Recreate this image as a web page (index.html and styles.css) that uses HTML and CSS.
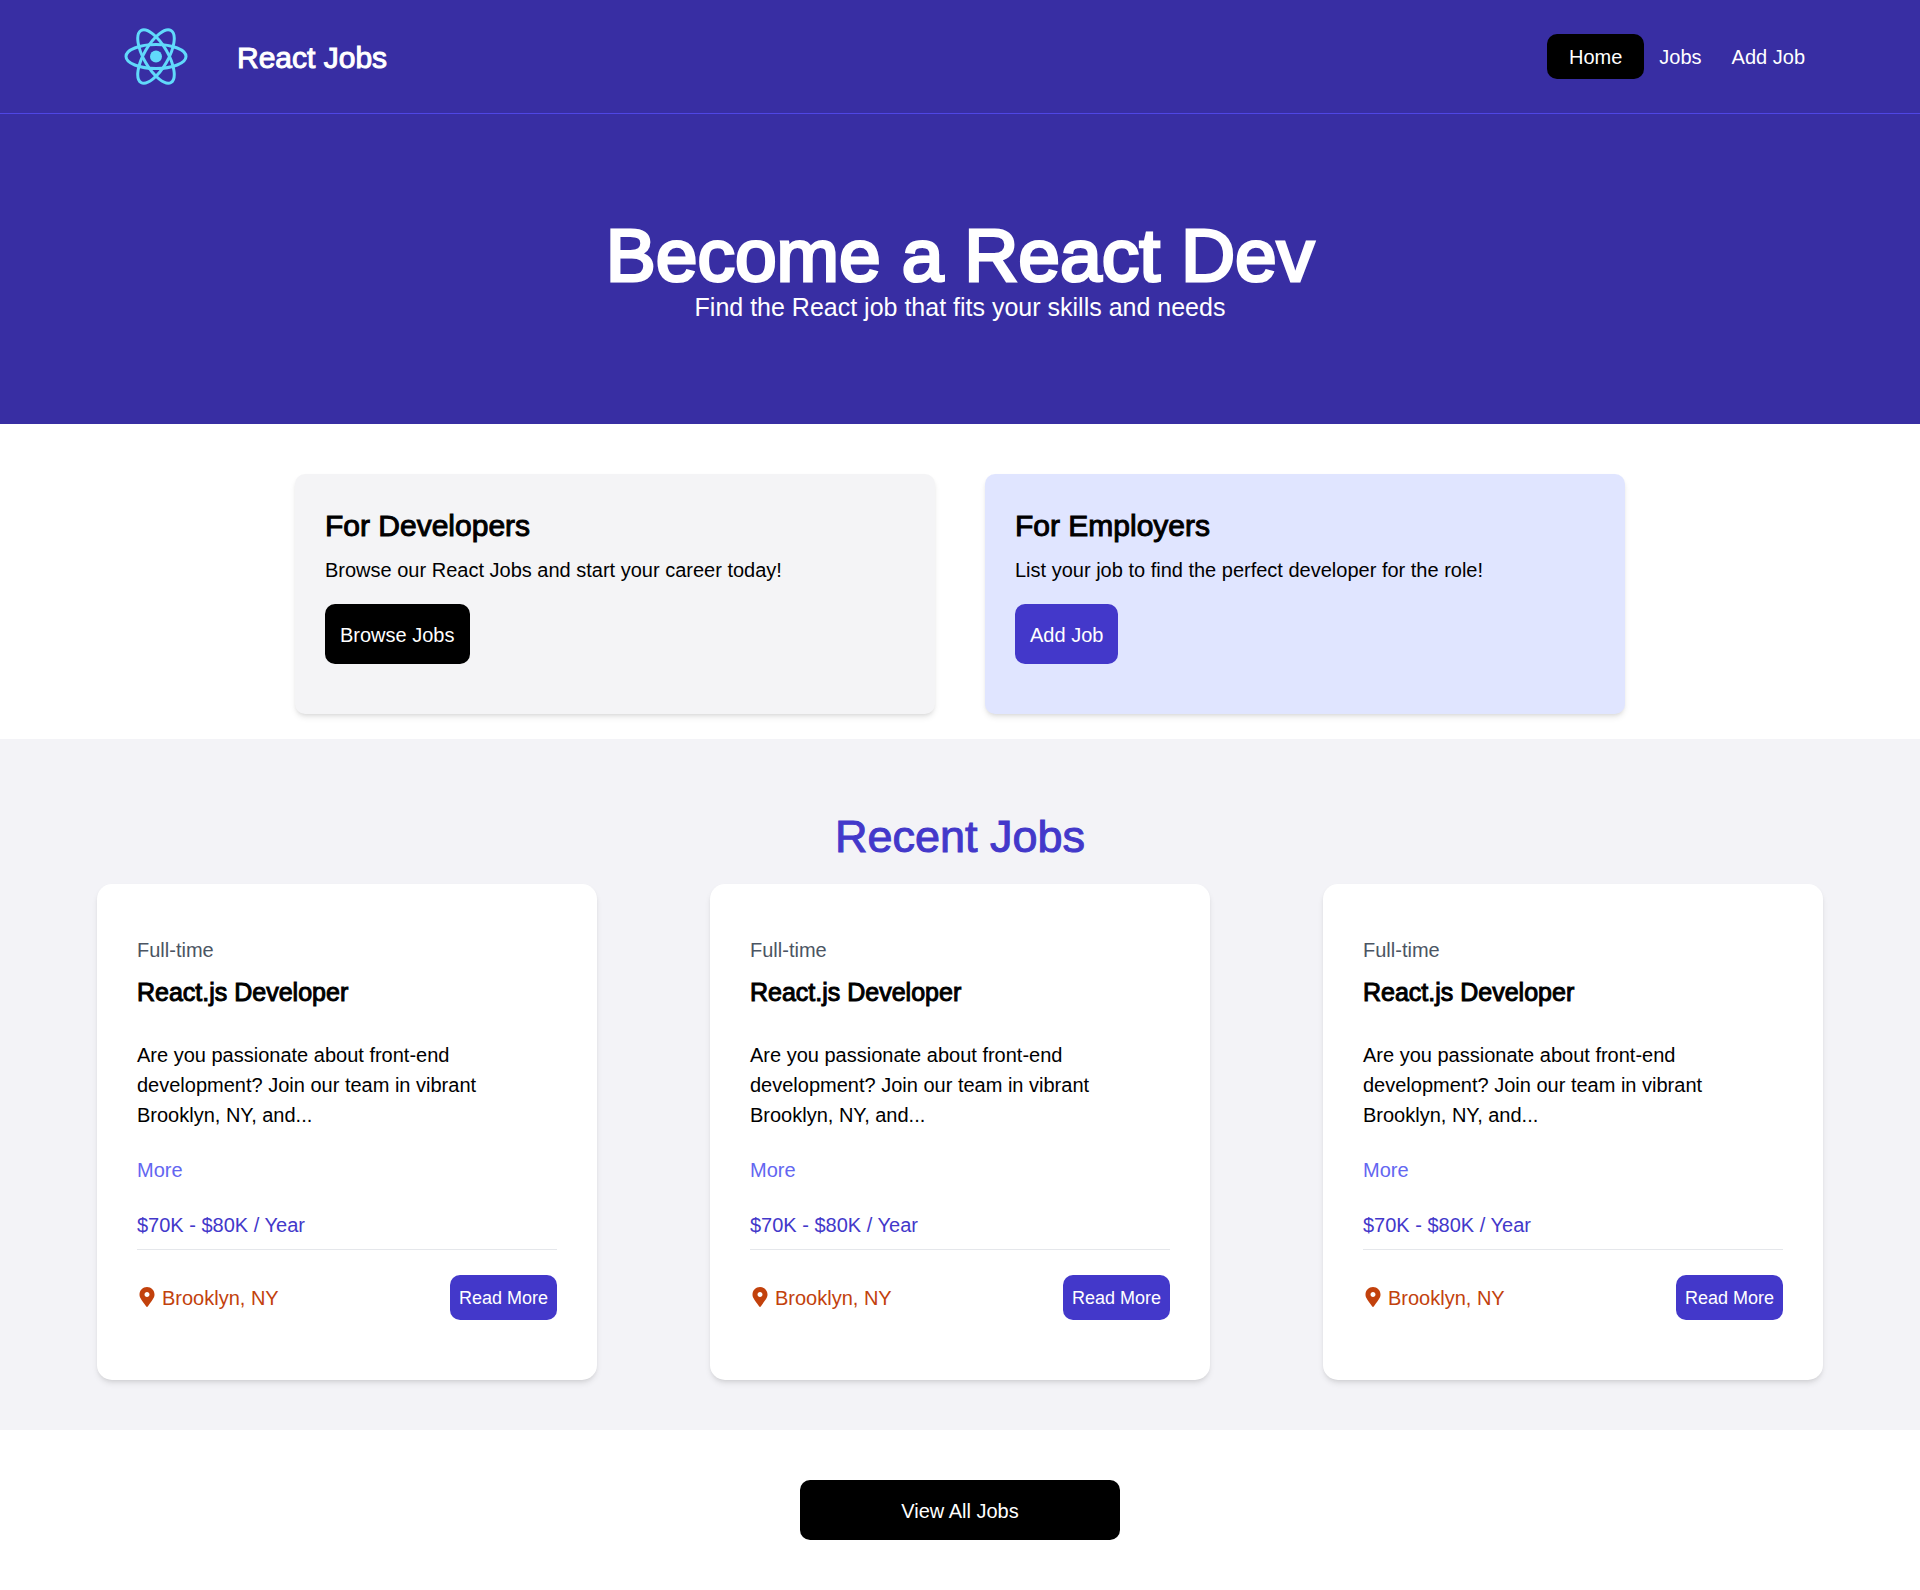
FILE: index.html
```html
<!DOCTYPE html>
<html lang="en">
<head>
  <meta charset="utf-8">
  <meta name="viewport" content="width=device-width, initial-scale=1">
  <title>React Jobs</title>
  <link rel="stylesheet" href="styles.css">
</head>
<body>
  <svg class="sprite" aria-hidden="true">
    <symbol id="pin" viewBox="0 0 384 512">
      <path d="M172.268 501.67C26.97 291.031 0 269.413 0 192 0 85.961 85.961 0 192 0s192 85.961 192 192c0 77.413-26.97 99.031-172.268 309.67-9.535 13.774-29.93 13.773-39.464 0zM192 256c35.346 0 64-28.654 64-64s-28.654-64-64-64-64 28.654-64 64 28.654 64 64 64z"/>
    </symbol>
  </svg>

  <header class="header">
    <a class="brand" href="#">
      <svg class="brand-logo" viewBox="-32 -28 64 56" aria-hidden="true">
        <circle r="6"/>
        <g class="orbits">
          <ellipse rx="30" ry="12"/>
          <ellipse rx="30" ry="12" transform="rotate(60)"/>
          <ellipse rx="30" ry="12" transform="rotate(120)"/>
        </g>
      </svg>
      <span class="brand-name faux-bold">React Jobs</span>
    </a>
    <nav class="nav">
      <a class="nav-link active" href="#">Home</a>
      <a class="nav-link" href="#">Jobs</a>
      <a class="nav-link" href="#">Add Job</a>
    </nav>
  </header>

  <main>
    <section class="hero">
      <h1 class="hero-title">Become a React Dev</h1>
      <p class="hero-text">Find the React job that fits your skills and needs</p>
    </section>

    <section class="audiences">
      <article class="audience">
        <h2 class="audience-title faux-bold">For Developers</h2>
        <p class="audience-text">Browse our React Jobs and start your career today!</p>
        <a class="button dark" href="#">Browse Jobs</a>
      </article>
      <article class="audience employers">
        <h2 class="audience-title faux-bold">For Employers</h2>
        <p class="audience-text">List your job to find the perfect developer for the role!</p>
        <a class="button" href="#">Add Job</a>
      </article>
    </section>

    <section class="recent">
      <h2 class="recent-title faux-bold">Recent Jobs</h2>
      <div class="jobs">
        <article class="job">
          <p class="job-type">Full-time</p>
          <h3 class="job-title faux-bold">React.js Developer</h3>
          <p class="job-text">Are you passionate about front-end development? Join our team in vibrant Brooklyn, NY, and...</p>
          <button class="job-more" type="button">More</button>
          <p class="job-salary">$70K - $80K / Year</p>
          <div class="job-footer">
            <span class="job-place"><svg class="pin" aria-hidden="true"><use href="#pin"/></svg>Brooklyn, NY</span>
            <a class="read-more" href="#">Read More</a>
          </div>
        </article>
        <article class="job">
          <p class="job-type">Full-time</p>
          <h3 class="job-title faux-bold">React.js Developer</h3>
          <p class="job-text">Are you passionate about front-end development? Join our team in vibrant Brooklyn, NY, and...</p>
          <button class="job-more" type="button">More</button>
          <p class="job-salary">$70K - $80K / Year</p>
          <div class="job-footer">
            <span class="job-place"><svg class="pin" aria-hidden="true"><use href="#pin"/></svg>Brooklyn, NY</span>
            <a class="read-more" href="#">Read More</a>
          </div>
        </article>
        <article class="job">
          <p class="job-type">Full-time</p>
          <h3 class="job-title faux-bold">React.js Developer</h3>
          <p class="job-text">Are you passionate about front-end development? Join our team in vibrant Brooklyn, NY, and...</p>
          <button class="job-more" type="button">More</button>
          <p class="job-salary">$70K - $80K / Year</p>
          <div class="job-footer">
            <span class="job-place"><svg class="pin" aria-hidden="true"><use href="#pin"/></svg>Brooklyn, NY</span>
            <a class="read-more" href="#">Read More</a>
          </div>
        </article>
      </div>
    </section>

    <section class="all-jobs">
      <a class="button dark wide" href="#">View All Jobs</a>
    </section>
  </main>
</body>
</html>
```
FILE: styles.css
```css
* {
  box-sizing: border-box;
  margin: 0;
}

body {
  background: #fff;
  color: #000;
  font: 20px/30px "Liberation Sans", Arial, sans-serif;
}

a {
  color: inherit;
  text-decoration: none;
}

h1, h2, h3 {
  font-weight: 400;
}

/* Thickens the regular cut while keeping its letter widths */
.faux-bold {
  -webkit-text-stroke: 1px currentColor;
}

.sprite {
  display: none;
}

.header {
  display: flex;
  align-items: center;
  justify-content: space-between;
  padding: 28px 100px;
  background: #382ea3;
  border-bottom: 1px solid #4f46e5;
  color: #fff;
}

.brand {
  display: flex;
  align-items: center;
  gap: 49px;
  padding-left: 24px;
}

.brand-logo {
  width: 64px;
  height: 57px;
  fill: #61dafb;
}

.orbits {
  fill: none;
  stroke: #61dafb;
  stroke-width: 3;
}

.brand-name {
  padding-top: 2px;
  font-size: 30px;
  line-height: 45px;
}

.nav {
  display: flex;
}

.nav-link {
  padding: 8px 15px 7px;
}

.nav-link.active {
  padding-inline: 22px;
  border-radius: 10px;
  background: #000;
}

.hero {
  padding: 104px 20px 103px;
  background: #382ea3;
  color: #fff;
  text-align: center;
}

.hero-title {
  font-size: 75px;
  line-height: 75px;
  -webkit-text-stroke: 3px currentColor;
}

.hero-text {
  font-size: 25px;
  line-height: 28px;
}

.audiences {
  display: grid;
  grid-template-columns: repeat(auto-fit, minmax(min(100%, 480px), 1fr));
  gap: 50px;
  max-width: 1370px;
  margin: 0 auto;
  padding: 50px 20px 25px;
}

.audience {
  padding: 30px 30px 50px;
  border-radius: 10px;
  background: #f4f4f6;
  box-shadow: 0 4px 6px -1px rgba(0, 0, 0, 0.1), 0 2px 4px -2px rgba(0, 0, 0, 0.1);
}

.audience.employers {
  background: #e0e5ff;
}

.audience-title {
  margin-bottom: 8px;
  font-size: 30px;
  line-height: 43px;
}

.audience-text {
  margin-bottom: 19px;
}

.button {
  display: inline-block;
  padding: 16px 15px 14px;
  border-radius: 10px;
  background: #4338ca;
  color: #fff;
  vertical-align: top;
}

.button.dark {
  background: #000;
}

.button.wide {
  width: 320px;
  text-align: center;
}

.recent {
  padding: 75px 20px 50px;
  background: #f3f3f7;
}

.recent-title {
  margin-bottom: 25px;
  color: #4338ca;
  font-size: 45px;
  line-height: 45px;
  text-align: center;
}

.jobs {
  display: flex;
  flex-wrap: wrap;
  justify-content: space-between;
  gap: 50px;
  max-width: 1726px;
  margin: 0 auto;
}

.job {
  width: 500px;
  max-width: 100%;
  padding: 51px 40px 60px;
  border-radius: 15px;
  background: #fff;
  box-shadow: 0 4px 6px -1px rgba(0, 0, 0, 0.1), 0 2px 4px -2px rgba(0, 0, 0, 0.1);
}

.job-type {
  margin-bottom: 10px;
  color: #4b5563;
}

.job-title {
  margin-bottom: 30px;
  font-size: 25px;
  line-height: 35px;
}

.job-text {
  max-width: 380px;
}

.job-more {
  display: block;
  margin: 25px 0;
  padding: 0;
  border: 0;
  background: none;
  color: #6366f1;
  font: inherit;
}

.job-salary {
  padding-bottom: 9px;
  border-bottom: 1px solid #e5e7eb;
  color: #4338ca;
}

.job-footer {
  display: flex;
  align-items: center;
  justify-content: space-between;
  padding-top: 25px;
}

.job-place {
  display: flex;
  align-items: center;
  gap: 5px;
  color: #c2410c;
}

.pin {
  width: 20px;
  height: 20px;
  margin-bottom: 2px;
  fill: currentColor;
}

.read-more {
  padding: 8px 9px 7px;
  border-radius: 10px;
  background: #4338ca;
  color: #fff;
  font-size: 18px;
}

.all-jobs {
  display: flex;
  justify-content: center;
  padding: 50px 20px;
}
```
